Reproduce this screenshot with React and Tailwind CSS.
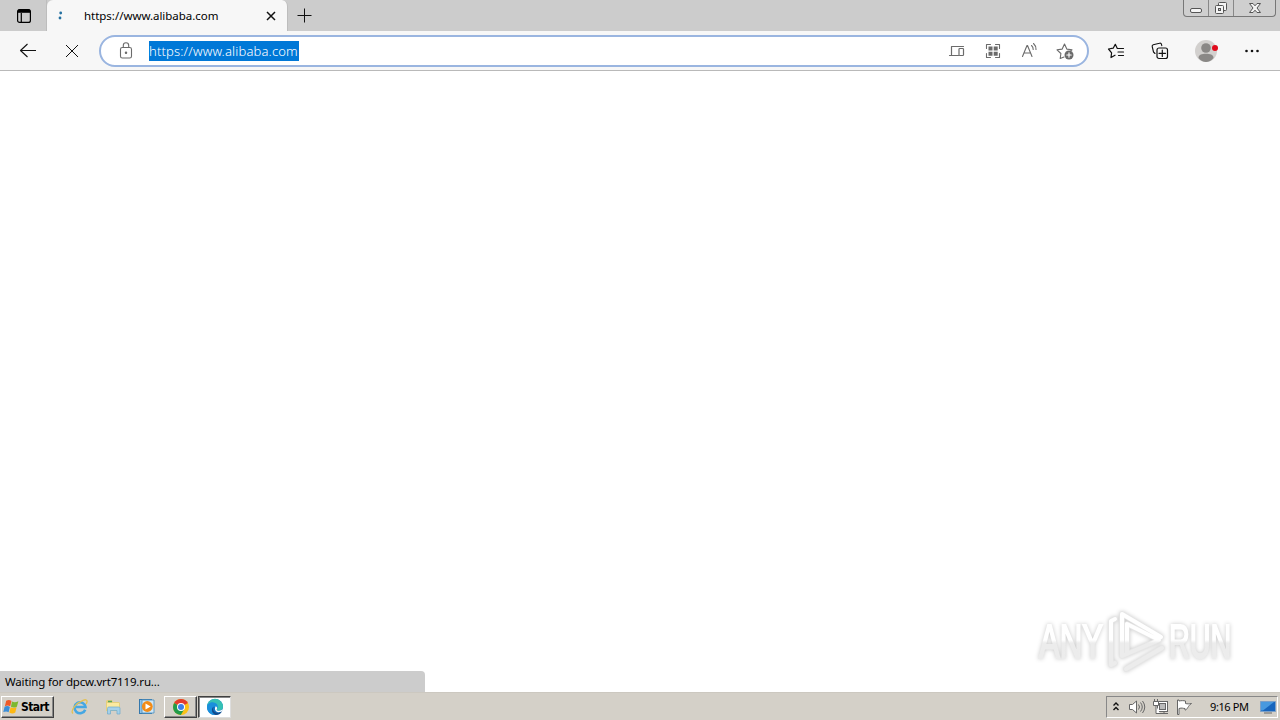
import React from 'react';

const url = 'https://www.alibaba.com';

function Icon({ size = 20, className = '', children }) {
    return (
        <svg
            width={size}
            height={size}
            viewBox={`0 0 ${size} ${size}`}
            fill="none"
            stroke="currentColor"
            strokeWidth="1.1"
            strokeLinecap="round"
            strokeLinejoin="round"
            className={`shrink-0 ${className}`}
        >
            {children}
        </svg>
    );
}

function WindowControls() {
    return (
        <div className="ml-auto mr-1 flex h-[17px] w-[93px] shrink-0 rounded-b border border-t-0 border-[#777] bg-[#cfcfcf] text-[#555]">
            <div className="flex w-[25px] items-center justify-center border-r border-[#888]">
                <svg width="14" height="14" viewBox="0 0 14 14" fill="#f4f4f4" stroke="currentColor">
                    <rect x="1.5" y="7.5" width="11" height="4" rx="1.5" />
                </svg>
            </div>
            <div className="flex w-[25px] items-center justify-center border-r border-[#888]">
                <svg width="14" height="14" viewBox="0 0 14 14" fill="#f4f4f4" stroke="currentColor">
                    <rect x="4.5" y="1.5" width="8" height="8" rx="1" />
                    <rect x="1.5" y="4.5" width="8" height="8" rx="1" />
                    <rect x="4.5" y="7.5" width="2" height="2" fill="#cfcfcf" />
                </svg>
            </div>
            <div className="flex flex-1 items-center justify-center">
                <svg width="14" height="14" viewBox="0 0 14 14" fill="#f4f4f4" stroke="currentColor">
                    <path d="M1.5 2.5H5L7 4.8 9 2.5h3.5L9 7l3.5 4.5H9L7 9.2 5 11.5H1.5L5 7z" />
                </svg>
            </div>
        </div>
    );
}

function TabBar() {
    return (
        <div className="flex h-[31px] bg-[#cccccc]">
            <div className="flex w-[47px] shrink-0 items-center justify-center border-r border-[#bdbdbd] pl-[2px] pt-px text-black">
                <svg width="16" height="16" viewBox="0 0 16 16" fill="none" stroke="currentColor" strokeWidth="1.2">
                    <rect x="1.6" y="1.6" width="12.8" height="12.8" rx="2" />
                    <path d="M2 3.2h12" strokeWidth="3.2" />
                    <path d="M5.3 5v9" />
                </svg>
            </div>
            <div className="flex w-[241px] shrink-0 items-center rounded-t-md border-r border-[#bdbdbd] bg-[#f7f7f7]">
                <svg width="8" height="14" viewBox="0 0 8 14" fill="#2470a0" className="ml-[9px]">
                    <circle cx="4.700" cy="4" r="1.400" />
                    <circle cx="4" cy="9" r="1.400" />
                </svg>
                <span className="ml-5 w-[180px] whitespace-nowrap font-['Noto_Sans',sans-serif] text-[11.5px] leading-4 tracking-[-0.03px] text-black">{url}</span>
                <svg width="10" height="10" viewBox="0 0 10 10" stroke="#111" strokeWidth="1.5" className="ml-[2px] mt-px">
                    <path d="M1 1l8 8M9 1L1 9" />
                </svg>
            </div>
            <svg width="16" height="16" viewBox="0 0 16 16" stroke="#111" className="ml-[9px] mt-2 shrink-0">
                <path d="M.5 7.5h14M7.5 .5v14" />
            </svg>
            <WindowControls />
        </div>
    );
}

function AddressBar() {
    return (
        <div className="ml-[17px] flex h-8 w-[990px] shrink-0 items-center rounded-full border-2 border-[#9ab5e0] bg-white text-[#6b6b6b]">
            <Icon className="ml-[15px]">
                <rect x="4.5" y="6.5" width="11" height="10.5" rx="1.8" />
                <path d="M7.3 6.3V4.5a2.7 2.7 0 0 1 5.4 0v1.8" />
                <circle cx="10" cy="11.7" r=".7" fill="currentColor" />
            </Icon>
            <span className="ml-[13px] h-5 w-[150px] whitespace-nowrap bg-[#0078d7] font-['Noto_Sans',sans-serif] text-[13px] font-light leading-5 tracking-[0.16px] text-white">{url}</span>
            <div className="ml-auto mr-3 flex items-center gap-4">
                <Icon>
                    <path d="M4.500 13.500v-8h12M2.500 14.500h9" strokeWidth="1.200" />
                    <rect x="12" y="7.500" width="4.500" height="7" rx=".8" strokeWidth="1.200" />
                </Icon>
                <Icon>
                    <path d="M3.500 7.500v-4h4M12.500 3.500h4v4M16.500 12.500v4h-4M7.500 16.500h-4v-4" />
                    <path d="M5.500 5.500h4v4h-4zM10.700 5.500h4v4h-4zM5.500 10.700h4v4h-4zM10.700 10.700h4v4h-4z" fill="currentColor" stroke="none" />
                </Icon>
                <Icon>
                    <path d="M3.500 15.500L8 4.500h.5L13 15.500M5 12h6.500" />
                    <path d="M12.500 4.500a5 5 0 0 1 1.700 4M14.500 2.500a7.500 7.500 0 0 1 2.500 6" />
                </Icon>
                <Icon>
                    <path d="M9 16l-3.800 1.500.7-5L2 8.800l5.200-.7L9.500 3l2.300 5.100 5.200.7-1.500 1.400" />
                    <circle cx="14" cy="14" r="4.500" fill="currentColor" stroke="none" />
                    <path d="M14 11.800v4.400M11.800 14h4.400" stroke="#fff" />
                </Icon>
            </div>
        </div>
    );
}

function Toolbar() {
    return (
        <div className="flex h-10 items-center border-b border-[#b9b9b9] bg-[#f7f7f7] text-[#111]">
            <Icon className="ml-[18px]">
                <path d="M18 9.500H2.500M9.500 3L2.500 9.500 9.500 16" strokeLinecap="butt" />
            </Icon>
            <Icon className="ml-6">
                <path d="M4 4l12 12M16 4L4 16" strokeLinecap="butt" strokeWidth="1" />
            </Icon>
            <AddressBar />
            <Icon className="ml-[17px]">
                <path d="M9 14.200l-4 2.300.6-4.700L2.500 8l4.700-.8L9.300 3.300l2 4.200H17.500M12 11h5.500M12.500 14.500h5" strokeWidth="1.200" />
            </Icon>
            <Icon className="ml-6">
                <path d="M5 12.500L3.500 11 2.200 5.500a1.500 1.500 0 0 1 1-1.800l6.300-1.500a1.500 1.500 0 0 1 1.900 1l.4 1.400" />
                <rect x="7" y="7" width="10.500" height="10.500" rx="2" strokeWidth="1.200" />
                <path d="M12.300 9v6.500M9 12.300h6.500" strokeWidth="1.200" />
            </Icon>
            <svg width="26" height="24" viewBox="0 0 26 24" className="ml-6 shrink-0">
                <circle cx="12" cy="12" r="11" fill="#d2d0ce" />
                <circle cx="12" cy="9" r="4.800" fill="#8a8886" />
                <path d="M4.500 19c0-3.400 3.500-4.200 7.500-4.200s7.500.8 7.500 4.200c-2 2.800-4.800 4-7.500 4s-5.500-1.200-7.500-4z" fill="#8a8886" />
                <circle cx="21" cy="9" r="3" fill="#e00b1c" />
            </svg>
            <svg width="16" height="4" viewBox="0 0 16 4" fill="#111" className="ml-[24px] shrink-0">
                <circle cx="2.500" cy="2" r="1.300" />
                <circle cx="8" cy="2" r="1.300" />
                <circle cx="13.500" cy="2" r="1.300" />
            </svg>
        </div>
    );
}

function Watermark() {
    return (
        <svg width="214" height="76" viewBox="0 0 214 76" fill="none" className="mb-[14px] mr-[34px] drop-shadow-[0_0_2px_rgba(0,0,0,0.22)]">
            <defs>
                <linearGradient id="split" gradientUnits="userSpaceOnUse" x1="0" y1="0" x2="0" y2="76">
                    <stop offset=".5" stopColor="#fff" />
                    <stop offset=".54" stopColor="#ececec" />
                </linearGradient>
            </defs>
            <g fill="url(#split)" stroke="url(#split)" strokeWidth="2" fontFamily="'Liberation Sans', sans-serif" fontSize="48">
                <text transform="translate(7 0) scale(.65 1)" x="0" y="56">ANY</text>
                <text transform="translate(137 0) scale(.6 1)" x="0" y="56">RUN</text>
            </g>
            <g strokeLinejoin="round" strokeLinecap="round">
                <path d="M90 54V12l39 23M90 54l37-16L95 22v30M83 17l-4 2v44l4-2M94 67l36-21" stroke="#e6e6e6" strokeWidth="5.500" />
                <path d="M90 54V12l39 23M90 54l37-16L95 22v30M83 17l-4 2v44l4-2M94 67l36-21" stroke="url(#split)" strokeWidth="4" />
            </g>
        </svg>
    );
}

function StartButton() {
    return (
        <div className="flex h-[22px] w-[53px] shrink-0 items-center border border-b-[#404040] border-l-white border-r-[#404040] border-t-white bg-[#d4d0c8] shadow-[inset_-1px_-1px_0_#888]">
            <svg width="18" height="18" viewBox="0 0 17 16" className="ml-px shrink-0">
                <path d="M3 2.200c2-1.200 3.600-.8 5 .1L6.800 7.300c-1.600-1-3.200-1-5-.1z" fill="#ef5a28" />
                <path d="M8.500 2.800c1.800 1 3.600 1 6-.3l-1.400 5.200c-2 1.100-3.800 1-5.600 0z" fill="#7db82f" />
                <path d="M1.500 7.800c1.800-1 3.400-.9 5 .1l-1.200 5c-1.600-1-3.100-1-5-.1z" fill="#3b8ed8" />
                <path d="M7.200 8.300c1.800 1 3.600 1 5.600 0l-1.200 5c-2 1.200-3.900 1-5.600-.1z" fill="#fdb813" />
            </svg>
            <span className="w-[29px] whitespace-nowrap font-['DejaVu_Sans_Condensed','DejaVu_Sans',sans-serif] text-[12px] font-bold leading-4 tracking-[-0.55px] text-black">Start</span>
        </div>
    );
}

function ExplorerIcon() {
    return (
        <svg width="18" height="18" viewBox="0 0 18 18" fill="none">
            <path d="M14.200 11.700A5.500 5.500 0 1 1 14.500 9H5" stroke="#45a7e3" strokeWidth="2.600" />
            <path d="M2 15.500C-1 13 5 5 12 2.300c5-1.900 4.500 1.700 3 3.700" stroke="#e3c052" strokeWidth="1.300" />
        </svg>
    );
}

function FolderIcon() {
    return (
        <svg width="18" height="18" viewBox="0 0 18 18">
            <path d="M1 3l1-1h5l1 2h6l1 1v8H1z" fill="#e5cf7b" />
            <path d="M2 5h12v7H2z" fill="#fbeaa0" />
            <path d="M3 3.500h4" stroke="#58a55c" strokeWidth="1.500" />
            <path d="M2.500 16V10.500c0-1 .5-1.500 1.500-1.500h9.500c1 0 1.500.5 1.500 1.500V16h-3v-3.500H5.500V16z" fill="#a5d1ea" stroke="#6faacb" strokeWidth=".7" />
        </svg>
    );
}

function PlayerIcon() {
    return (
        <svg width="18" height="18" viewBox="0 0 18 18">
            <rect x=".5" y="1.500" width="12" height="14" fill="#8fc3e8" stroke="#3578ac" />
            <path d="M3 2h12v13H3z" fill="#d0e7f6" stroke="#5594c1" strokeWidth=".9" />
            <circle cx="8.300" cy="8.500" r="5.400" fill="#f28c18" />
            <path d="M6.500 5.400v6.200L11.700 8.500z" fill="#fff" />
        </svg>
    );
}

function ChromeIcon() {
    return (
        <svg width="18" height="18" viewBox="0 0 18 18">
            <circle cx="9" cy="9" r="8" fill="#fbc116" />
            <path d="M9 9L2.100 5A8 8 0 0 1 15.900 5z" fill="#e33b2e" />
            <path d="M2.100 5A8 8 0 0 0 8.800 17l3.600-6L9 9z" fill="#229b4b" />
            <circle cx="9" cy="9" r="4" fill="#fff" />
            <circle cx="9" cy="9" r="3" fill="#3d7fe8" />
        </svg>
    );
}

function EdgeIcon() {
    return (
        <svg width="18" height="18" viewBox="0 0 18 18">
            <circle cx="9" cy="9" r="8" fill="#1274c6" />
            <path d="M1 9a8 8 0 0 1 16-.5c0 3-2 4-4.500 4-1.800 0-2.500-.6-1.600-1.600.8-1 .1-3.800-3.100-3.800C4.800 7.100 1.800 9 1 9z" fill="#35c1b5" />
            <path d="M1 9c.3-3.300 3.500-5 6.500-4.600C11 4.800 12.500 7.500 11.500 10L8 8.500C5 9 5 14 9.500 16.800 5 17.500 1 14 1 9z" fill="#1a8fdc" />
            <path d="M7.700 9c-1.700 2.500.3 5.800 4 5.800 1.800 0 3.600-.7 4.500-1.800-1.500 3-4 4-6.500 4C5.500 15.500 4.800 10.800 7.700 9z" fill="#114a8b" />
            <path d="M9.700 8.200c1.300.5 1.600 1.600 1.200 2.700-.9 1 .3 1.800 2 1.800 2 0 3.500-.8 4.100-2.200-.3 1.900-1.400 3.200-3 3.600-3.500.7-6.500-2.300-4.300-5.900z" fill="#fff" />
        </svg>
    );
}

function Tray() {
    return (
        <div className="ml-auto mr-[2px] flex h-[22px] w-[172px] shrink-0 items-center border border-b-white border-l-[#888] border-r-white border-t-[#888] text-[#666]">
            <svg width="8" height="12" viewBox="0 0 8 12" fill="none" stroke="#111" strokeWidth="1.400" className="mb-px ml-[5px]">
                <path d="M1.500 4.500L4 2l2.500 2.500M1.500 9L4 6.500 6.500 9" />
            </svg>
            <svg width="18" height="18" viewBox="0 0 18 18" fill="none" stroke="currentColor" className="ml-[8px]">
                <path d="M1.500 6.500h3L8.500 3v12l-4-3.500h-3z" fill="#fff" />
                <path d="M10.500 6.500q2 2.500 0 5M12.500 4.500q3.500 4.500 0 9M14.500 3q4.500 6 0 12" />
            </svg>
            <svg width="18" height="18" viewBox="0 0 18 18" fill="none" stroke="currentColor" className="ml-[6px]">
                <rect x="5.500" y="3.500" width="10" height="10" fill="#fff" />
                <rect x="7.500" y="5.500" width="6" height="6" fill="#bbb" />
                <path d="M8 15.500h8M12 14v2" />
                <path d="M2.500 1v3M5.500 1v3M1.500 3.500h5v4h-5zM4 7.500v8h4" fill="#fff" />
            </svg>
            <svg width="18" height="18" viewBox="0 0 18 18" fill="#fff" stroke="currentColor" className="ml-[5px]">
                <path d="M2.500 2v14.500H4V10.500c3-1 4 0 6 0v1.500c2 .5 3-4.500 6.500-6.500-2.500.5-4 .5-6 0V3c-2-.5-4-.5-6.500 0V2z" />
            </svg>
            <span className="ml-[17px] w-[44px] whitespace-nowrap font-['Noto_Sans',sans-serif] text-[11px] leading-4 tracking-[-0.4px] text-black">9:16 PM</span>
            <svg width="16" height="16" viewBox="0 0 16 16" className="ml-[6px]">
                <path d="M.5 2.500h15v10H.5z" fill="#1765bd" stroke="#7b9fc7" />
                <path d="M1 3H14L3 11.500H1z" fill="#4899df" />
                <path d="M4 14h8" stroke="#666" />
            </svg>
        </div>
    );
}

function Taskbar() {
    return (
        <div className="flex h-[27px] items-center bg-[#d4d0c8] pb-px pt-[2px]">
            <div className="w-px" />
            <StartButton />
            <div className="ml-[17px] flex w-[93px] items-center gap-4">
                <ExplorerIcon />
                <FolderIcon />
                <PlayerIcon />
            </div>
            <div className="flex h-[22px] w-[33px] items-center justify-center border border-b-[#404040] border-l-white border-r-[#404040] border-t-white bg-[#d4d0c8] shadow-[inset_-1px_-1px_0_#888]">
                <ChromeIcon />
            </div>
            <div className="ml-px flex h-[22px] w-[33px] items-center justify-center border border-b-[#ddd] border-l-[#404040] border-r-[#ddd] border-t-[#404040] bg-white shadow-[inset_1px_1px_0_#888]">
                <EdgeIcon />
            </div>
            <Tray />
        </div>
    );
}

export default function App() {
    return (
        <div className="flex h-[720px] w-[1280px] flex-col overflow-hidden bg-white">
            <TabBar />
            <Toolbar />
            <div className="flex flex-1 items-end justify-between border-b border-[#ccc8c0]">
                <div className="flex h-[21px] w-[425px] items-center rounded-tr bg-[#cccccc] pl-[5px]">
                    <span className="whitespace-nowrap font-['Noto_Sans',sans-serif] text-[11.5px] leading-4 tracking-[-0.16px] text-black">Waiting for dpcw.vrt7119.ru...</span>
                </div>
                <Watermark />
            </div>
            <Taskbar />
        </div>
    );
}
